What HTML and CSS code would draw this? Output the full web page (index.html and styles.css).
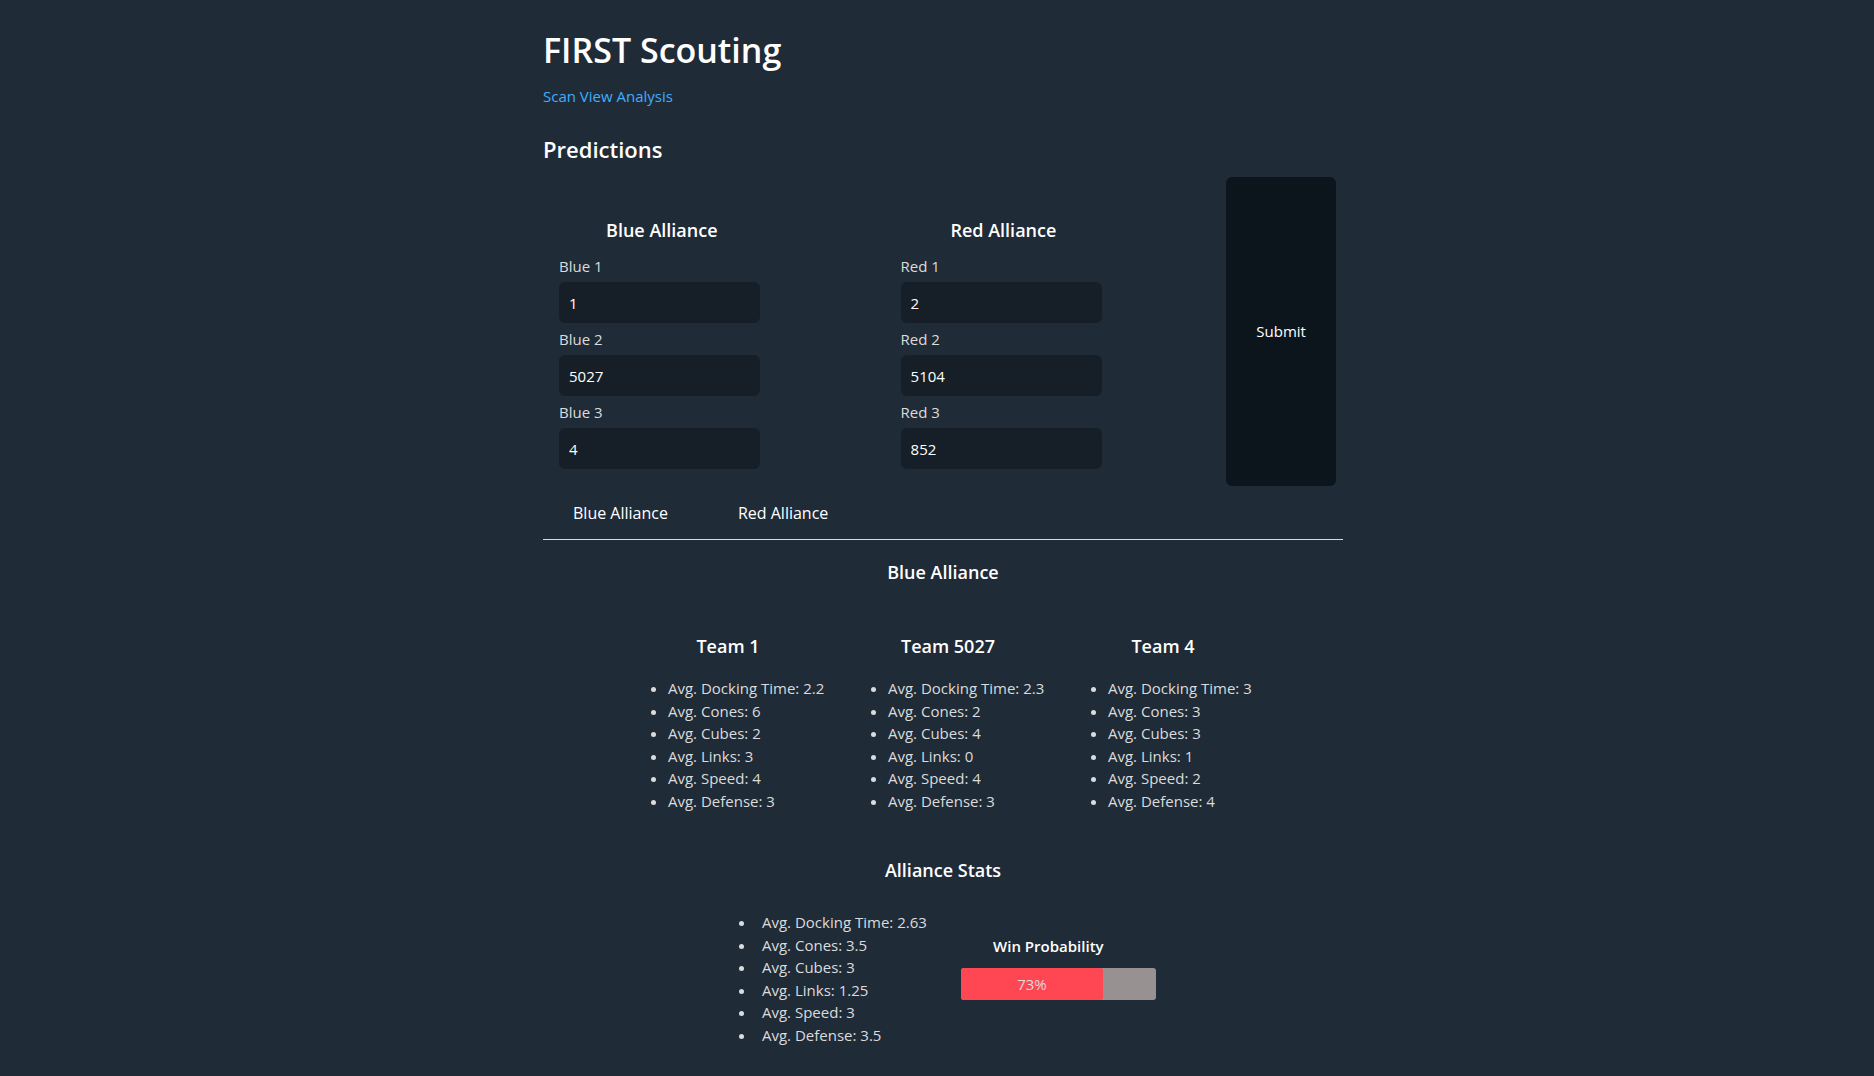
FILE: index.html
```html
<!DOCTYPE html>
<html lang="en">
<head>
<meta charset="utf-8">
<title>FIRST Scouting</title>
<link rel="stylesheet" href="styles.css">
</head>
<body>
<main class="page">
  <h1 class="title">FIRST Scouting</h1>
  <nav class="links"><a href="#scan">Scan</a> <a href="#view">View</a> <a href="#analysis">Analysis</a></nav>
  <h2 class="subtitle">Predictions</h2>

  <form class="predict">
    <fieldset class="alliance">
      <h3 class="heading">Blue Alliance</h3>
      <label for="blue1">Blue 1</label>
      <input id="blue1" type="text" value="1">
      <label for="blue2">Blue 2</label>
      <input id="blue2" type="text" value="5027">
      <label for="blue3">Blue 3</label>
      <input id="blue3" type="text" value="4">
    </fieldset>
    <fieldset class="alliance">
      <h3 class="heading">Red Alliance</h3>
      <label for="red1">Red 1</label>
      <input id="red1" type="text" value="2">
      <label for="red2">Red 2</label>
      <input id="red2" type="text" value="5104">
      <label for="red3">Red 3</label>
      <input id="red3" type="text" value="852">
    </fieldset>
    <button class="submit" type="button">Submit</button>
  </form>

  <div class="tabs">
    <button class="tab" type="button">Blue Alliance</button>
    <button class="tab" type="button">Red Alliance</button>
  </div>

  <section class="results">
    <h3 class="heading">Blue Alliance</h3>
    <div class="teams">
      <article class="team">
        <h3 class="heading">Team 1</h3>
        <ul class="stats">
          <li>Avg. Docking Time: 2.2</li>
          <li>Avg. Cones: 6</li>
          <li>Avg. Cubes: 2</li>
          <li>Avg. Links: 3</li>
          <li>Avg. Speed: 4</li>
          <li>Avg. Defense: 3</li>
        </ul>
      </article>
      <article class="team">
        <h3 class="heading">Team 5027</h3>
        <ul class="stats">
          <li>Avg. Docking Time: 2.3</li>
          <li>Avg. Cones: 2</li>
          <li>Avg. Cubes: 4</li>
          <li>Avg. Links: 0</li>
          <li>Avg. Speed: 4</li>
          <li>Avg. Defense: 3</li>
        </ul>
      </article>
      <article class="team">
        <h3 class="heading">Team 4</h3>
        <ul class="stats">
          <li>Avg. Docking Time: 3</li>
          <li>Avg. Cones: 3</li>
          <li>Avg. Cubes: 3</li>
          <li>Avg. Links: 1</li>
          <li>Avg. Speed: 2</li>
          <li>Avg. Defense: 4</li>
        </ul>
      </article>
    </div>

    <h3 class="heading">Alliance Stats</h3>
    <div class="summary">
      <ul class="stats stats-wide">
        <li>Avg. Docking Time: 2.63</li>
        <li>Avg. Cones: 3.5</li>
        <li>Avg. Cubes: 3</li>
        <li>Avg. Links: 1.25</li>
        <li>Avg. Speed: 3</li>
        <li>Avg. Defense: 3.5</li>
      </ul>
      <div class="chance">
        <h4 class="chance-title">Win Probability</h4>
        <div class="bar"><div class="fill" style="width: 73%">73%</div></div>
      </div>
    </div>
  </section>
</main>
</body>
</html>
```
FILE: styles.css
```css
* {
  box-sizing: border-box;
}

body {
  margin: 0;
  background: #202b38;
  color: #dbdbdb;
  font-family: "Segoe UI", "Open Sans", "Noto Sans", sans-serif;
  font-size: 15px;
  line-height: 1.5;
}

.page {
  max-width: 812px;
  margin: 0 auto;
  padding: 24px 0 0 12px;
}

h1, h2, h3, h4, ul {
  margin: 0;
}

.title,
.subtitle,
.heading,
.chance-title {
  color: #fff;
  font-weight: 600;
}

.title {
  font-size: 34px;
  line-height: 52px;
}

.links {
  margin-top: 8px;
  line-height: 24px;
}

.links a {
  color: #41adff;
  text-decoration: none;
}

.subtitle {
  margin-top: 23px;
  font-size: 22px;
  line-height: 36px;
}

.heading {
  font-size: 18px;
  line-height: 28px;
  text-align: center;
}

.predict {
  display: flex;
  margin-top: 10px;
  padding-right: 7px;
}

.alliance {
  display: flex;
  flex-direction: column;
  width: 238px;
  margin: 0 104px 0 0;
  padding: 39px 0 0 16px;
  border: 0;
}

.alliance label {
  line-height: 22px;
  margin-bottom: 5px;
}

.alliance .heading {
  margin-bottom: 11px;
  padding-right: 16px;
}

.alliance input {
  width: 201px;
  height: 41px;
  margin-bottom: 5px;
  padding: 0 10px;
  border: 0;
  border-radius: 6px;
  background: #161f27;
  color: #fff;
  font: inherit;
}

.submit {
  width: 110px;
  height: 309px;
  margin-left: auto;
  padding: 0;
  border: 0;
  border-radius: 6px;
  background: #0c151c;
  color: #fff;
  font: inherit;
}

.tabs {
  display: flex;
  gap: 10px;
  padding: 5px 0 4px;
  border-bottom: 1px solid #dbdbdb;
}

.tab {
  padding: 10px 30px;
  border: 0;
  background: transparent;
  color: #fff;
  font: inherit;
  font-size: 16px;
}

.results {
  padding: 18px 0 24px;
}

.teams {
  display: grid;
  grid-template-columns: 190px 190px 180px;
  gap: 30px;
  justify-content: center;
  margin: 46px 0 44px;
  padding-left: 10px;
}

.team .heading {
  padding-right: 10px;
  margin-bottom: 17px;
}

.stats {
  padding-left: 30px;
  white-space: nowrap;
}

.stats-wide li {
  padding-left: 6px;
}

.summary {
  display: flex;
  gap: 34px;
  padding-left: 183px;
  margin-top: 27px;
}

.chance {
  width: 195px;
  padding-top: 23px;
}

.chance-title {
  margin-bottom: 10px;
  padding-right: 20px;
  line-height: 24px;
  text-align: center;
}

.bar {
  border-radius: 3px;
  background: #979191;
}

.fill {
  border-radius: 3px;
  background: #ff4754;
  line-height: 32px;
  text-align: center;
}
```
